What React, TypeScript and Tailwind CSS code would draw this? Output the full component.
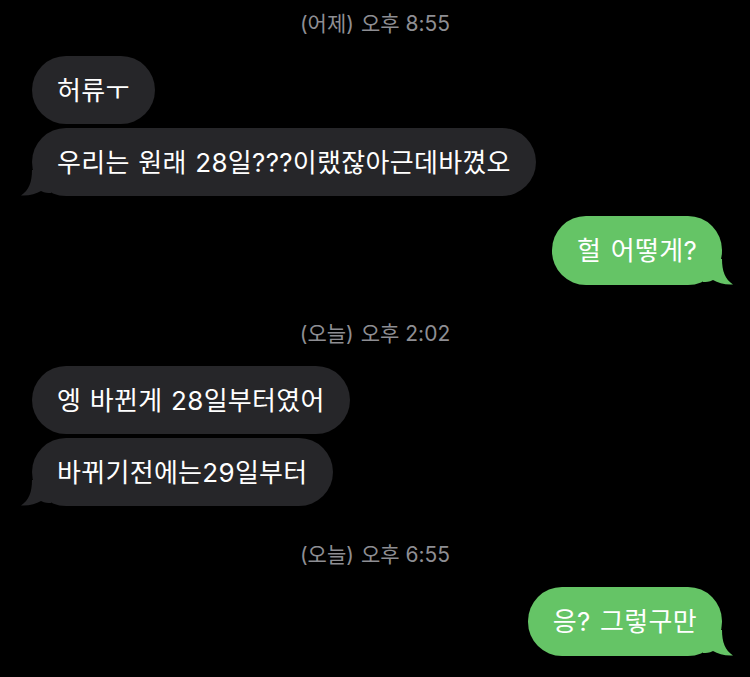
const font = "font-['Inter','Noto_Sans_CJK_KR',sans-serif]"

function Stamp({ day, time, className = '' }: { day: string; time: string; className?: string }) {
  return (
    <div className={`h-6 flex items-center justify-center text-[21px] leading-6 text-[#8e8e93] ${className}`}>
      <span>({day})</span>
      <span className="ml-[7px]">{time}</span>
    </div>
  )
}

function LeftTail() {
  return (
    <svg className="absolute bottom-0 left-[-11px]" width="30" height="26" viewBox="0 0 30 26">
      <path d="M11 0 C11 12 8 20 0 25.5 C8 26 15 24 20 21 C24 23 27 23 30 23 L30 0 Z" fill="#262629" />
    </svg>
  )
}

function RightTail() {
  return (
    <svg className="absolute bottom-0 right-[-11px]" width="30" height="26" viewBox="0 0 30 26">
      <path d="M19 0 C19 12 22 20 30 25.5 C22 26 15 24 10 21 C6 23 3 23 0 23 L0 0 Z" fill="#65c466" />
    </svg>
  )
}

function Received({ text, tail = false }: { text: string; tail?: boolean }) {
  return (
    <div className="flex justify-start pl-[32px]">
      <div className="relative h-[68px] flex items-center rounded-[34px] bg-[#262629] px-[25px] text-[26px] tracking-[0.3px] [word-spacing:1px] text-white">
        {tail && <LeftTail />}
        <span className="relative">{text}</span>
      </div>
    </div>
  )
}

function Sent({ text }: { text: string }) {
  return (
    <div className="flex justify-end pr-[28px]">
      <div className="relative h-[69px] flex items-center rounded-[34px] bg-[#65c466] px-[25px] text-[26px] tracking-[0.3px] [word-spacing:2px] text-white">
        <RightTail />
        <span className="relative">{text}</span>
      </div>
    </div>
  )
}

export default function App() {
  return (
    <div className={`w-[750px] h-[677px] overflow-hidden bg-black pt-3 ${font}`}>
      <Stamp day="어제" time="오후 8:55" className="mb-5" />
      <div className="flex flex-col gap-1">
        <Received text="허류ㅜ" />
        <Received text="우리는 원래 28일???이랬잖아근데바꼈오" tail />
      </div>
      <div className="mt-5">
        <Sent text="헐 어떻게?" />
      </div>

      <Stamp day="오늘" time="오후 2:02" className="mt-[37px] mb-5" />
      <div className="flex flex-col gap-1">
        <Received text="엥 바뀐게 28일부터였어" />
        <Received text="바뀌기전에는29일부터" tail />
      </div>

      <Stamp day="오늘" time="오후 6:55" className="mt-[37px] mb-5" />
      <Sent text="응? 그렇구만" />
    </div>
  )
}
